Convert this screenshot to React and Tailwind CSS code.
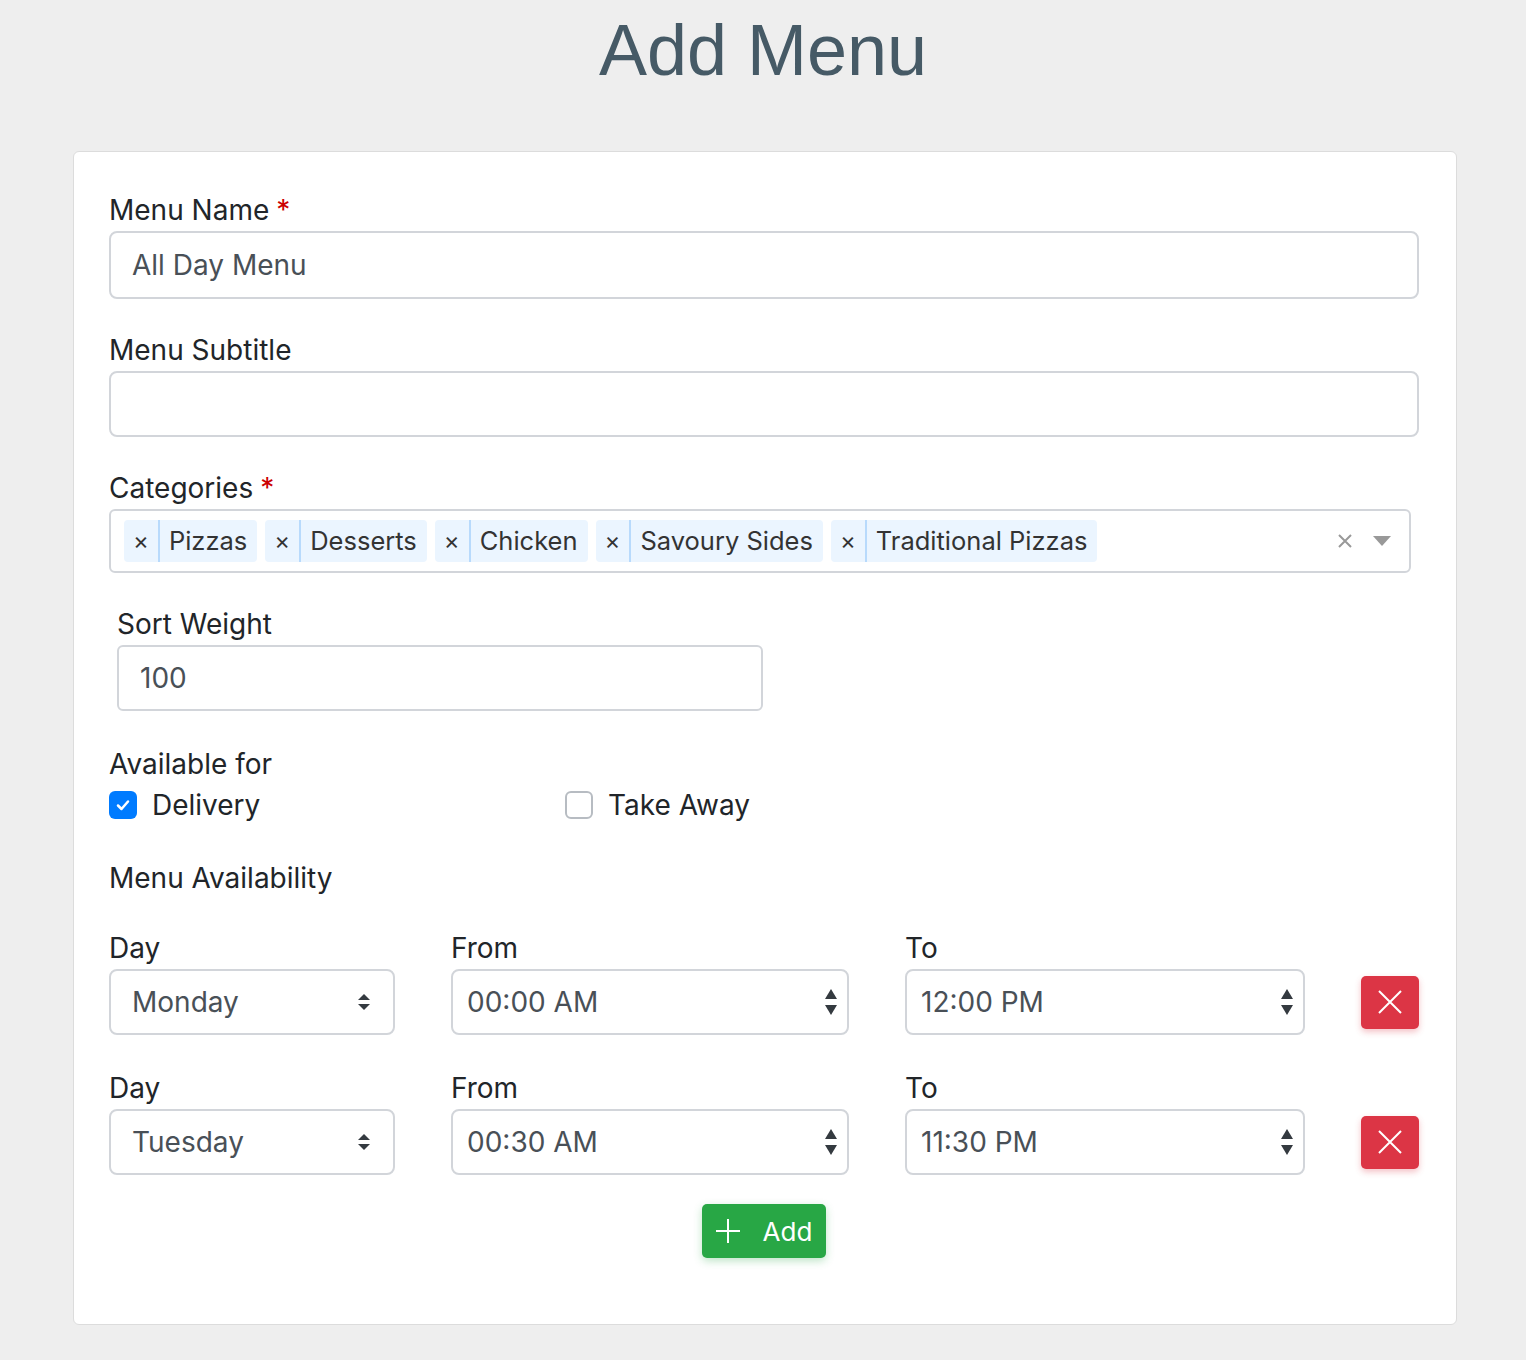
import React from "react";

const font = { fontFamily: "Inter, 'Noto Sans', sans-serif" };

function Label({ children, required, className = "" }) {
  return (
    <div className={"h-[36px] leading-[36px] text-[28px] text-[#212529] " + className}>
      {children}
      {required && <span className="text-[#cc0000] ml-[7px]">*</span>}
    </div>
  );
}

function SelectArrows() {
  return (
    <svg width="14" height="20" viewBox="0 0 14 20" className="shrink-0">
      <path d="M7 2 L13 8 L1 8 Z" fill="#343a40" />
      <path d="M7 18 L13 12 L1 12 Z" fill="#343a40" />
    </svg>
  );
}

function SpinArrows() {
  return (
    <svg width="14" height="28" viewBox="0 0 14 28" className="shrink-0">
      <path d="M7 1 L13 11 L1 11 Z" fill="#343a40" />
      <path d="M7 27 L13 17 L1 17 Z" fill="#343a40" />
    </svg>
  );
}

function Tag({ text }) {
  return (
    <div className="flex h-[42px] items-center rounded-[4px] bg-[#ebf5ff] text-[#333333]">
      <span className="px-[9px] text-[24px] leading-none">×</span>
      <span className="h-full w-[2px] bg-[#b8dafc]" />
      <span className="pl-[9px] pr-[10px] text-[25.5px]">{text}</span>
    </div>
  );
}

function XIcon({ size = 26 }) {
  return (
    <svg width={size} height={size} viewBox="0 0 26 26">
      <path d="M2 2 L24 24 M24 2 L2 24" stroke="white" strokeWidth="2" />
    </svg>
  );
}

function TimeRow({ day, from, to, className = "" }) {
  return (
    <div className={"grid grid-cols-[286px_398px_400px_58px] gap-x-[56px] " + className}>
      <Label>Day</Label>
      <Label>From</Label>
      <Label>To</Label>
      <div />
      <div className="mt-[3px] flex h-[66px] items-center justify-between rounded-[8px] border-2 border-[#d2d5da] pl-[21px] pr-[22px] text-[28px] text-[#495057]">
        <span>{day}</span>
        <SelectArrows />
      </div>
      <div className="mt-[3px] flex h-[66px] items-center justify-between rounded-[8px] border-2 border-[#d2d5da] pl-[14px] pr-[9px] text-[28px] text-[#495057]">
        <span>{from}</span>
        <SpinArrows />
      </div>
      <div className="mt-[3px] flex h-[66px] items-center justify-between rounded-[8px] border-2 border-[#d2d5da] pl-[14px] pr-[9px] text-[28px] text-[#495057]">
        <span>{to}</span>
        <SpinArrows />
      </div>
      <div className="mt-[3px] flex items-center">
        <button className="flex h-[53px] w-[58px] items-center justify-center rounded-[5px] bg-[#dc3545] shadow-[0_3px_6px_rgba(220,53,69,0.3)]">
          <XIcon />
        </button>
      </div>
    </div>
  );
}

export default function App() {
  return (
    <div className="min-h-[1360px] bg-[#eeeeee] pt-[5px] pb-[35px]" style={font}>
      <h1
        className="text-center text-[72px] leading-[90px] text-[#465a66]"
        style={{ fontFamily: "'Liberation Sans', Arial, sans-serif" }}
      >
        Add Menu
      </h1>
      <div className="ml-[73px] mt-[56px] w-[1384px] rounded-[6px] border border-[#dcdcdc] bg-white pl-[35px] pr-[37px] pt-[40px] pb-[66px]">
        <Label required>Menu Name</Label>
        <div className="mt-[3px] flex h-[68px] items-center rounded-[8px] border-2 border-[#d2d5da] pl-[21px] text-[28px] text-[#495057]">
          All Day Menu
        </div>

        <Label className="mt-[33px]">Menu Subtitle</Label>
        <div className="mt-[3px] h-[66px] rounded-[8px] border-2 border-[#d2d5da]" />

        <Label required className="mt-[33px]">Categories</Label>
        <div className="mt-[3px] mr-[8px] flex h-[64px] items-center rounded-[6px] border-2 border-[#d2d5da] pl-[13px] pr-[18px]">
          <div className="flex flex-1 items-center gap-[8px]">
            <Tag text="Pizzas" />
            <Tag text="Desserts" />
            <Tag text="Chicken" />
            <Tag text="Savoury Sides" />
            <Tag text="Traditional Pizzas" />
          </div>
          <svg width="16" height="16" viewBox="0 0 16 16" className="mr-[20px]">
            <path d="M2 2 L14 14 M14 2 L2 14" stroke="#999999" strokeWidth="2" />
          </svg>
          <svg width="18" height="10" viewBox="0 0 18 10">
            <path d="M0 0 L18 0 L9 10 Z" fill="#999999" />
          </svg>
        </div>

        <Label className="mt-[33px] ml-[8px]">Sort Weight</Label>
        <div className="mt-[3px] ml-[8px] flex h-[66px] w-[646px] items-center rounded-[6px] border-2 border-[#d2d5da] pl-[21px] text-[28px] text-[#495057]">
          100
        </div>

        <Label className="mt-[35px]">Available for</Label>
        <div className="mt-[5px] flex h-[36px] items-center text-[28px] text-[#212529]">
          <div className="flex w-[456px] items-center">
            <span className="flex h-[28px] w-[28px] items-center justify-center rounded-[6px] bg-[#007bff]">
              <svg width="16" height="16" viewBox="0 0 16 16">
                <path d="M3 8.5 L6.5 12 L13 4.5" stroke="white" strokeWidth="2.5" fill="none" strokeLinecap="round" strokeLinejoin="round" />
              </svg>
            </span>
            <span className="ml-[15px]">Delivery</span>
          </div>
          <div className="flex items-center">
            <span className="h-[28px] w-[28px] rounded-[6px] border-2 border-[#b7bcc2] bg-white" />
            <span className="ml-[15px]">Take Away</span>
          </div>
        </div>

        <Label className="mt-[37px]">Menu Availability</Label>

        <TimeRow day="Monday" from="00:00 AM" to="12:00 PM" className="mt-[34px]" />
        <TimeRow day="Tuesday" from="00:30 AM" to="11:30 PM" className="mt-[35px]" />

        <div className="mt-[29px] flex justify-center">
          <button className="flex h-[54px] items-center rounded-[5px] bg-[#28a745] pl-[14px] pr-[14px] text-[26px] text-white shadow-[0_3px_8px_rgba(40,167,69,0.3)]">
            <svg width="24" height="24" viewBox="0 0 24 24">
              <path d="M12 0 L12 24 M0 12 L24 12" stroke="white" strokeWidth="2" />
            </svg>
            <span className="ml-[23px]">Add</span>
          </button>
        </div>
      </div>
    </div>
  );
}
